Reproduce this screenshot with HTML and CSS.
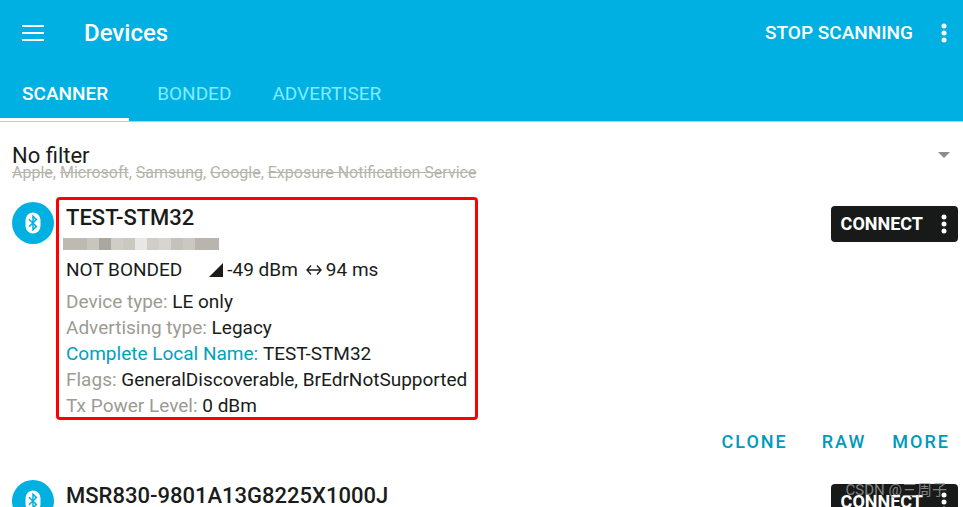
FILE: index.html
```html
<!DOCTYPE html>
<html lang="en">
<head>
<meta charset="utf-8">
<title>Devices</title>
<meta name="viewport" content="width=device-width, initial-scale=1">
<link rel="stylesheet" href="styles.css">
</head>
<body>
<svg class="defs" aria-hidden="true">
  <symbol id="dots" viewBox="0 0 6 20"><circle cx="3" cy="3" r="2.5"/><circle cx="3" cy="10" r="2.5"/><circle cx="3" cy="17" r="2.5"/></symbol>
  <symbol id="bluetooth" viewBox="0 0 16 22"><rect x="0.5" y="0.5" width="15" height="21" rx="7.5" fill="#fff"/><path d="M4 7.200l7.400 7.200L8 17.700V4.300l3.400 3.300L4 14.800" fill="none" stroke="#00b0e0" stroke-width="1.500"/></symbol>
</svg>
<header class="appbar">
  <div class="toolbar">
    <button class="icon-button" aria-label="Menu"><svg class="menu-icon" viewBox="0 0 22 16"><path d="M0 1h22M0 8h22M0 15h22" stroke="#fff" stroke-width="2"/></svg></button>
    <h1 class="title">Devices</h1>
    <button class="scan">STOP SCANNING</button>
    <button class="icon-button" aria-label="More options"><svg class="dots"><use href="#dots"/></svg></button>
  </div>
  <nav class="tabs">
    <a class="tab active" href="#scanner">SCANNER</a>
    <a class="tab" href="#bonded">BONDED</a>
    <a class="tab" href="#advertiser">ADVERTISER</a>
  </nav>
</header>
<main>
  <button class="filter">
    <span class="filter-text">
      <span class="filter-title">No filter</span>
      <span class="filter-list"><s>Apple</s>, <s>Microsoft</s>, <s>Samsung</s>, <s>Google</s>, <s>Exposure Notification Service</s></span>
    </span>
    <svg class="caret" viewBox="0 0 12 6"><path d="M0 0h12L6 6z" fill="#8d8d86"/></svg>
  </button>
  <article class="device">
    <span class="badge"><svg class="bt" aria-hidden="true"><use href="#bluetooth"/></svg></span>
    <div class="details marked">
      <h2 class="name">TEST-STM32</h2>
      <div class="mosaic"></div>
      <p class="status">
        <span class="bond">NOT BONDED</span>
        <svg class="signal" viewBox="0 0 14 14"><path d="M14 0v14H0z" fill="#1a1c1a"/></svg>
        <span class="rssi">-49 dBm</span>
        <svg class="interval" viewBox="0 0 16 12"><path d="M1 6h14M5 1.500L1 6l4 4.500M11 1.500L15 6l-4 4.500" fill="none" stroke="#1a1c1a" stroke-width="1.300"/></svg>
        <span>94 ms</span>
      </p>
      <dl class="facts">
        <div><dt>Device type:</dt> <dd>LE only</dd></div>
        <div><dt>Advertising type:</dt> <dd>Legacy</dd></div>
        <div><dt class="known">Complete Local Name:</dt> <dd>TEST-STM32</dd></div>
        <div><dt>Flags:</dt> <dd>GeneralDiscoverable, BrEdrNotSupported</dd></div>
        <div><dt>Tx Power Level:</dt> <dd>0 dBm</dd></div>
      </dl>
    </div>
    <div class="connect"><button class="connect-main">CONNECT</button><button class="connect-more" aria-label="Connect options"><svg class="dots"><use href="#dots"/></svg></button></div>
    <div class="actions"><button>CLONE</button><button>RAW</button><button>MORE</button></div>
  </article>
  <article class="device">
    <span class="badge"><svg class="bt" aria-hidden="true"><use href="#bluetooth"/></svg></span>
    <div class="details">
      <h2 class="name">MSR830-9801A13G8225X1000J</h2>
    </div>
    <div class="connect"><button class="connect-main">CONNECT</button><button class="connect-more" aria-label="Connect options"><svg class="dots"><use href="#dots"/></svg></button></div>
  </article>
</main>
<div class="watermark">CSDN @三周子</div>
</body>
</html>
```
FILE: styles.css
```css
* { box-sizing: border-box; }
html, body { height: 100%; }
body {
  margin: 0;
  overflow: hidden;
  position: relative;
  background: #fff;
  color: #1a1c1a;
  font: 18px/26px Roboto, sans-serif;
}
h1, h2, p, dl, dd { margin: 0; }
button {
  padding: 0;
  border: 0;
  background: none;
  color: inherit;
  font: inherit;
  cursor: pointer;
}
svg { display: block; flex: none; }
.defs { position: absolute; width: 0; height: 0; }
.dots { width: 6px; height: 20px; fill: #fff; }

.appbar { background: #00b0e2; color: #fff; border-bottom: 1px solid #8be0f2; }
.toolbar { display: flex; align-items: center; height: 65px; padding: 0 16px 0 22px; }
.menu-icon { width: 22px; height: 16px; }
.title { flex: 1; margin-left: 40px; font-size: 24px; font-weight: 500; line-height: 32px; }
.scan { margin-right: 28px; font-size: 19px; font-weight: 500; }
.tabs { display: flex; height: 56px; }
.tab {
  padding: 16px 21px 0 22px;
  border-bottom: 3px solid transparent;
  color: #80ecff;
  font-size: 19px;
  text-decoration: none;
}
.tab + .tab { padding-left: 28px; padding-right: 13px; }
.tab.active { color: #fff; font-weight: 500; border-color: #fff; }

.filter {
  display: flex;
  align-items: center;
  justify-content: space-between;
  width: 100%;
  height: 75px;
  padding: 0 13px 10px 12px;
  text-align: left;
}
.filter-text { display: flex; flex-direction: column; padding-top: 16px; }
.filter-title { font-size: 22px; line-height: 20px; }
.filter-list { color: #b4b4aa; font-size: 16px; line-height: 14px; }
.caret { width: 12px; height: 6px; }

.device {
  display: grid;
  grid-template-columns: 42px 1fr auto;
  column-gap: 2px;
  padding: 0 5px 0 12px;
}
.badge {
  display: grid;
  place-items: center;
  width: 42px;
  height: 42px;
  margin-top: 5px;
  border-radius: 50%;
  background: #00b0e0;
}
.bt { width: 16px; height: 22px; }
.details { justify-self: start; padding: 5px 8px 0 7px; border: 3px solid transparent; }
.marked { border-color: #f00; border-radius: 4px; }
.name { font-size: 22px; font-weight: 500; line-height: 26px; }
.mosaic {
  width: 156px;
  height: 12px;
  margin: 7px 0 8px -3px;
  background: linear-gradient(90deg, #bebab2 0 24px, #c8c5be 24px 36px, #aaa7a1 36px 48px, #d0cdc6 48px 60px, #cbc8c0 60px 72px, #e8e7e4 72px 84px, #d0cec9 84px 96px, #d8d5d0 96px 108px, #c5c2bb 108px 120px, #cbc8c1 120px 132px, #b9b5ae 132px 156px);
}
.status { display: flex; align-items: center; font-size: 19px; line-height: 24px; }
.signal { width: 14px; height: 14px; margin: 0 4px 0 27px; }
.interval { width: 16px; height: 12px; margin: 0 4px 0 8px; }
.facts { margin-bottom: -2px; padding-top: 7px; font-size: 19px; }
.facts dt, .facts dd { display: inline; }
.facts dt { color: #9c9b92; }
.facts .known { color: #00a0be; }
.connect {
  display: flex;
  align-items: center;
  height: 36px;
  margin-top: 9px;
  padding: 0 11px 0 10px;
  border-radius: 4px;
  background: #171a18;
  color: #fff;
  font-weight: 700;
}
.connect-more { margin-left: 18px; }
.actions {
  grid-column: 1 / -1;
  display: flex;
  justify-content: flex-end;
  gap: 26px;
  padding: 9px 8px 20px;
  color: #009abb;
  font-weight: 500;
}
.actions button { letter-spacing: 2px; }
.actions button:first-child { margin-right: 8px; }
.watermark {
  position: absolute;
  right: 16px;
  bottom: 5px;
  color: rgba(160, 160, 160, 0.8);
  font: 15px/24px Roboto, "Noto Sans CJK SC", sans-serif;
}
```
